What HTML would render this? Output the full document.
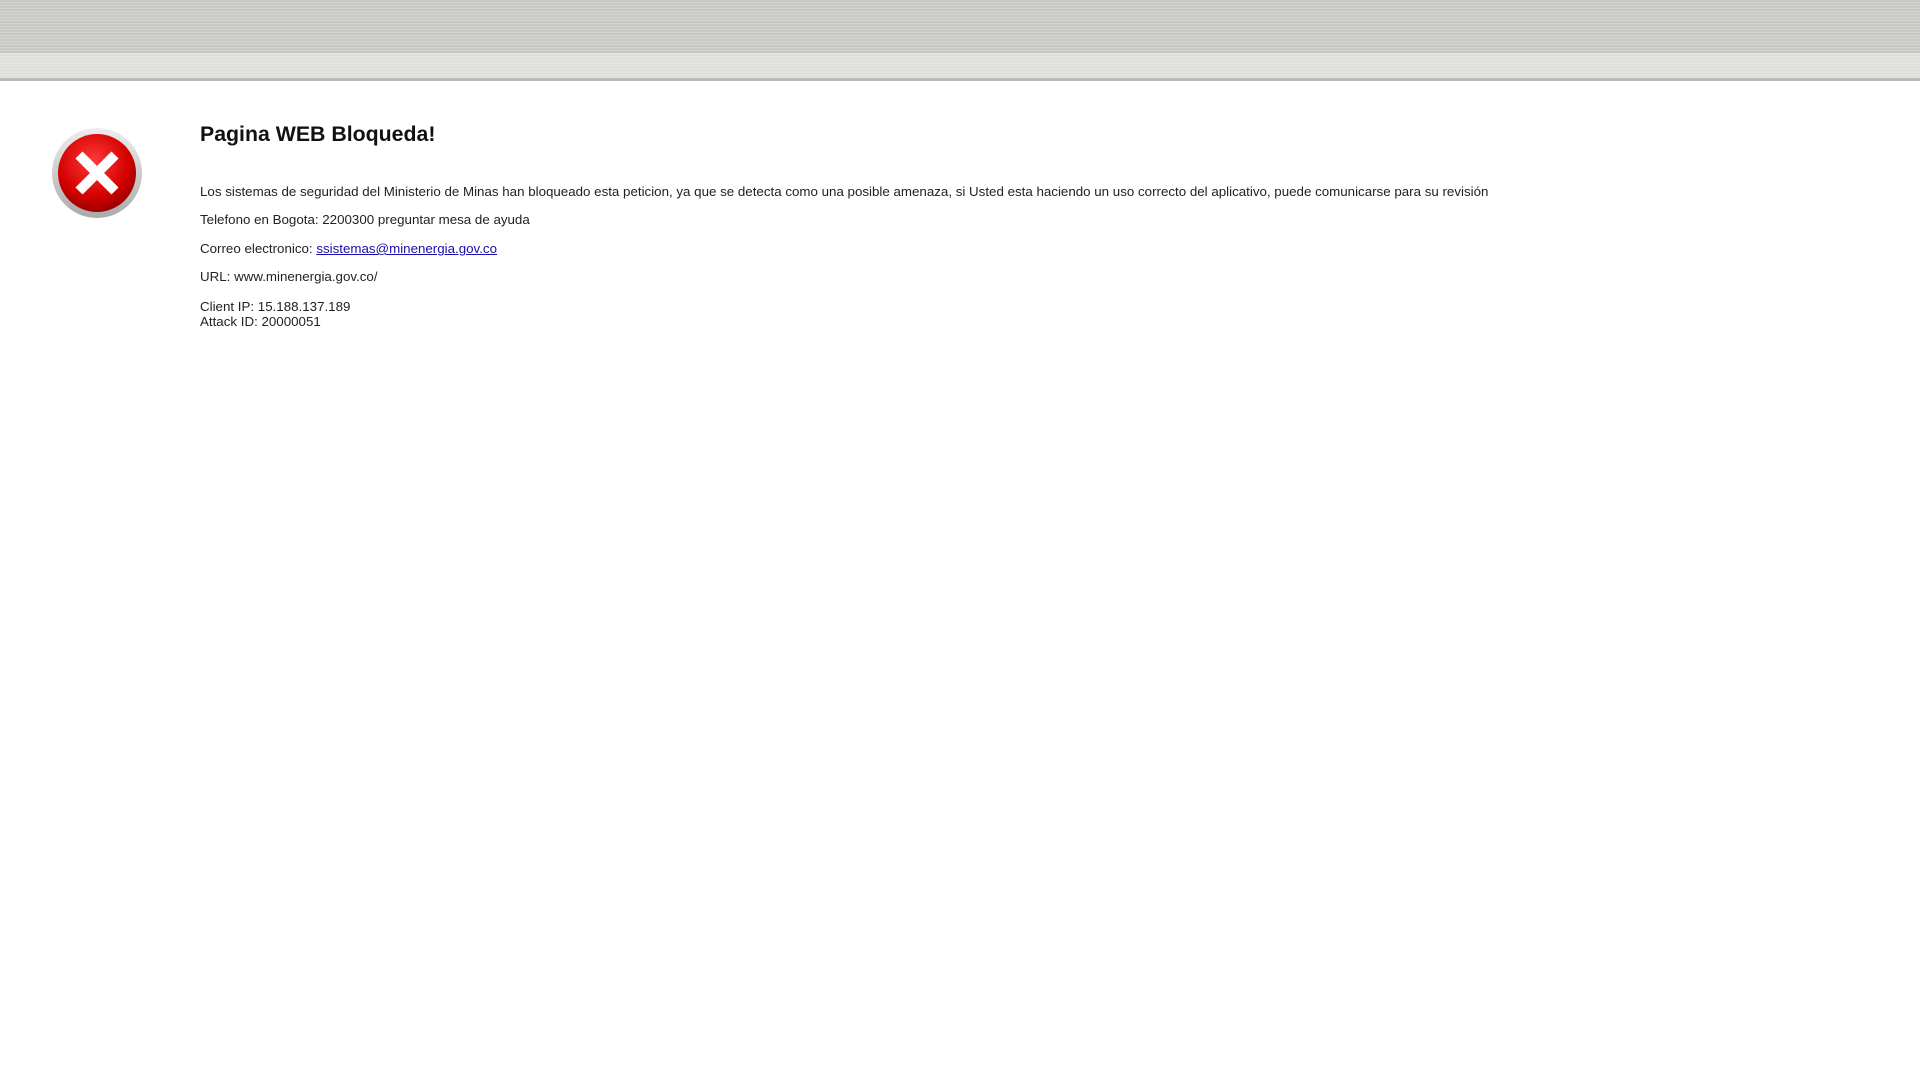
<!DOCTYPE html>
<html><head><style>
body{margin:0;width:1920px;height:1080px;background:#fff;font-family:"Liberation Sans",Arial,sans-serif;color:#222;position:relative;overflow:hidden}
.h1{position:absolute;left:0;top:0;width:1920px;height:52px;background:repeating-linear-gradient(#c9cac6 0 2px,#d3d4d0 2px 3px)}
.h2{position:absolute;left:0;top:52px;width:1920px;height:26px;background:repeating-linear-gradient(#e3e4e1 0 2px,#dcddda 2px 3px);border-top:1px solid #c8c9c5}
.h3{position:absolute;left:0;top:78px;width:1920px;height:3px;background:#b9bab6}
.t{position:absolute;left:200px;font-size:13.33px;line-height:15px;white-space:nowrap}
h1{position:absolute;left:200px;top:122px;margin:0;font-size:21.3px;color:#111}
a{color:#1a0dab}
</style></head><body>
<div class="h1"></div><div class="h2"></div><div class="h3"></div>
<svg style="position:absolute;left:50px;top:126px" width="94" height="94" viewBox="0 0 94 94">
<defs><radialGradient id="r" cx="45%" cy="35%" r="65%"><stop offset="0" stop-color="#ff3a3a"/><stop offset=".7" stop-color="#d40000"/><stop offset="1" stop-color="#9a0000"/></radialGradient>
<linearGradient id="g" x1="0" y1="0" x2="0" y2="1"><stop offset="0" stop-color="#eee"/><stop offset="1" stop-color="#aaa"/></linearGradient></defs>
<circle cx="47" cy="47" r="45" fill="url(#g)"/>
<circle cx="47" cy="47" r="39" fill="url(#r)"/>
<path d="M29 29L65 65M65 29L29 65" stroke="#fff" stroke-width="10"/>
</svg>
<h1>Pagina WEB Bloqueda!</h1>
<div class="t" style="top:184px">Los sistemas de seguridad del Ministerio de Minas han bloqueado esta peticion, ya que se detecta como una posible amenaza, si Usted esta haciendo un uso correcto del aplicativo, puede comunicarse para su revisión</div>
<div class="t" style="top:212px">Telefono en Bogota: 2200300 preguntar mesa de ayuda</div>
<div class="t" style="top:241px">Correo electronico: <a href="#">ssistemas@minenergia.gov.co</a></div>
<div class="t" style="top:269px">URL: www.minenergia.gov.co/</div>
<div class="t" style="top:299px">Client IP: 15.188.137.189</div>
<div class="t" style="top:314px">Attack ID: 20000051</div>
</body></html>
